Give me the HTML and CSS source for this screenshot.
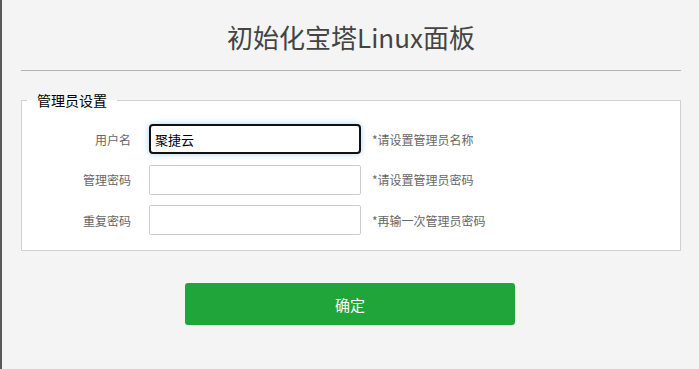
FILE: index.html
```html
<!DOCTYPE html>
<html lang="zh-CN">
<head>
<meta charset="utf-8">
<title>初始化宝塔Linux面板</title>
<link rel="stylesheet" href="styles.css">
</head>
<body>
<div class="page">
  <h1 class="title">初始化宝塔Linux面板</h1>
  <hr class="line">
  <fieldset class="box">
    <legend class="box-legend">管理员设置</legend>
    <div class="rows">
      <div class="row">
        <label class="row-label">用户名</label>
        <input class="field field-focus" type="text" value="聚捷云">
        <span class="hint">*请设置管理员名称</span>
      </div>
      <div class="row">
        <label class="row-label">管理密码</label>
        <input class="field" type="password">
        <span class="hint">*请设置管理员密码</span>
      </div>
      <div class="row">
        <label class="row-label">重复密码</label>
        <input class="field" type="password">
        <span class="hint">*再输一次管理员密码</span>
      </div>
    </div>
  </fieldset>
  <button class="btn" type="button">确定</button>
</div>
</body>
</html>
```
FILE: styles.css
```css
html, body {
  margin: 0;
  padding: 0;
  background: #f4f4f4;
}
body {
  font-family: "Noto Sans CJK SC", "Noto Sans", sans-serif;
  width: 699px;
  height: 369px;
  overflow: hidden;
}
.page {
  box-sizing: border-box;
  height: 369px;
  border-left: 2px solid #5a5a5a;
  padding: 0 18px 0 19px;
  display: flex;
  flex-direction: column;
}
.title {
  margin: 0;
  padding-top: 18px;
  height: 38px;
  line-height: 38px;
  font-size: 26px;
  font-weight: 400;
  color: #444;
  text-align: center;
}
.line {
  margin: 14px 0 0 0;
  border: 0;
  height: 1px;
  background: #b5b5b5;
}
.box {
  margin: 19px 0 0 0;
  padding: 0 0 15px 0;
  border: 1px solid #d0d0d0;
  background: #fff;
  min-width: 0;
}
.box-legend {
  margin-left: 5px;
  padding: 0 10px;
  font-size: 14px;
  line-height: 20px;
  color: #000;
}
.rows {
  display: flex;
  flex-direction: column;
  gap: 10.5px;
  padding-top: 14px;
}
.row {
  display: flex;
  align-items: center;
  height: 30px;
}
.row-label {
  width: 109px;
  text-align: right;
  font-size: 12px;
  color: #666;
  margin-right: 18px;
}
.field {
  box-sizing: border-box;
  width: 212px;
  height: 30px;
  border: 1px solid #ccc;
  border-radius: 2px;
  background: #fff;
  padding: 0 5px;
  font-family: "Noto Sans CJK SC", "Noto Sans", sans-serif;
  font-size: 13px;
  color: #000;
  outline: none;
}
.field-focus {
  border: 2px solid #111;
  border-radius: 4px;
  box-shadow: 0 0 6px rgba(102, 175, 233, 0.55);
  padding: 0 4px;
}
.hint {
  margin-left: 11px;
  font-size: 12px;
  color: #666;
}
.btn {
  align-self: center;
  margin: 32px 2px 0 0;
  width: 330px;
  height: 42px;
  border: 0;
  border-radius: 3px;
  background: #20a53a;
  color: #fff;
  font-family: "Noto Sans CJK SC", "Noto Sans", sans-serif;
  font-size: 15px;
}
```
